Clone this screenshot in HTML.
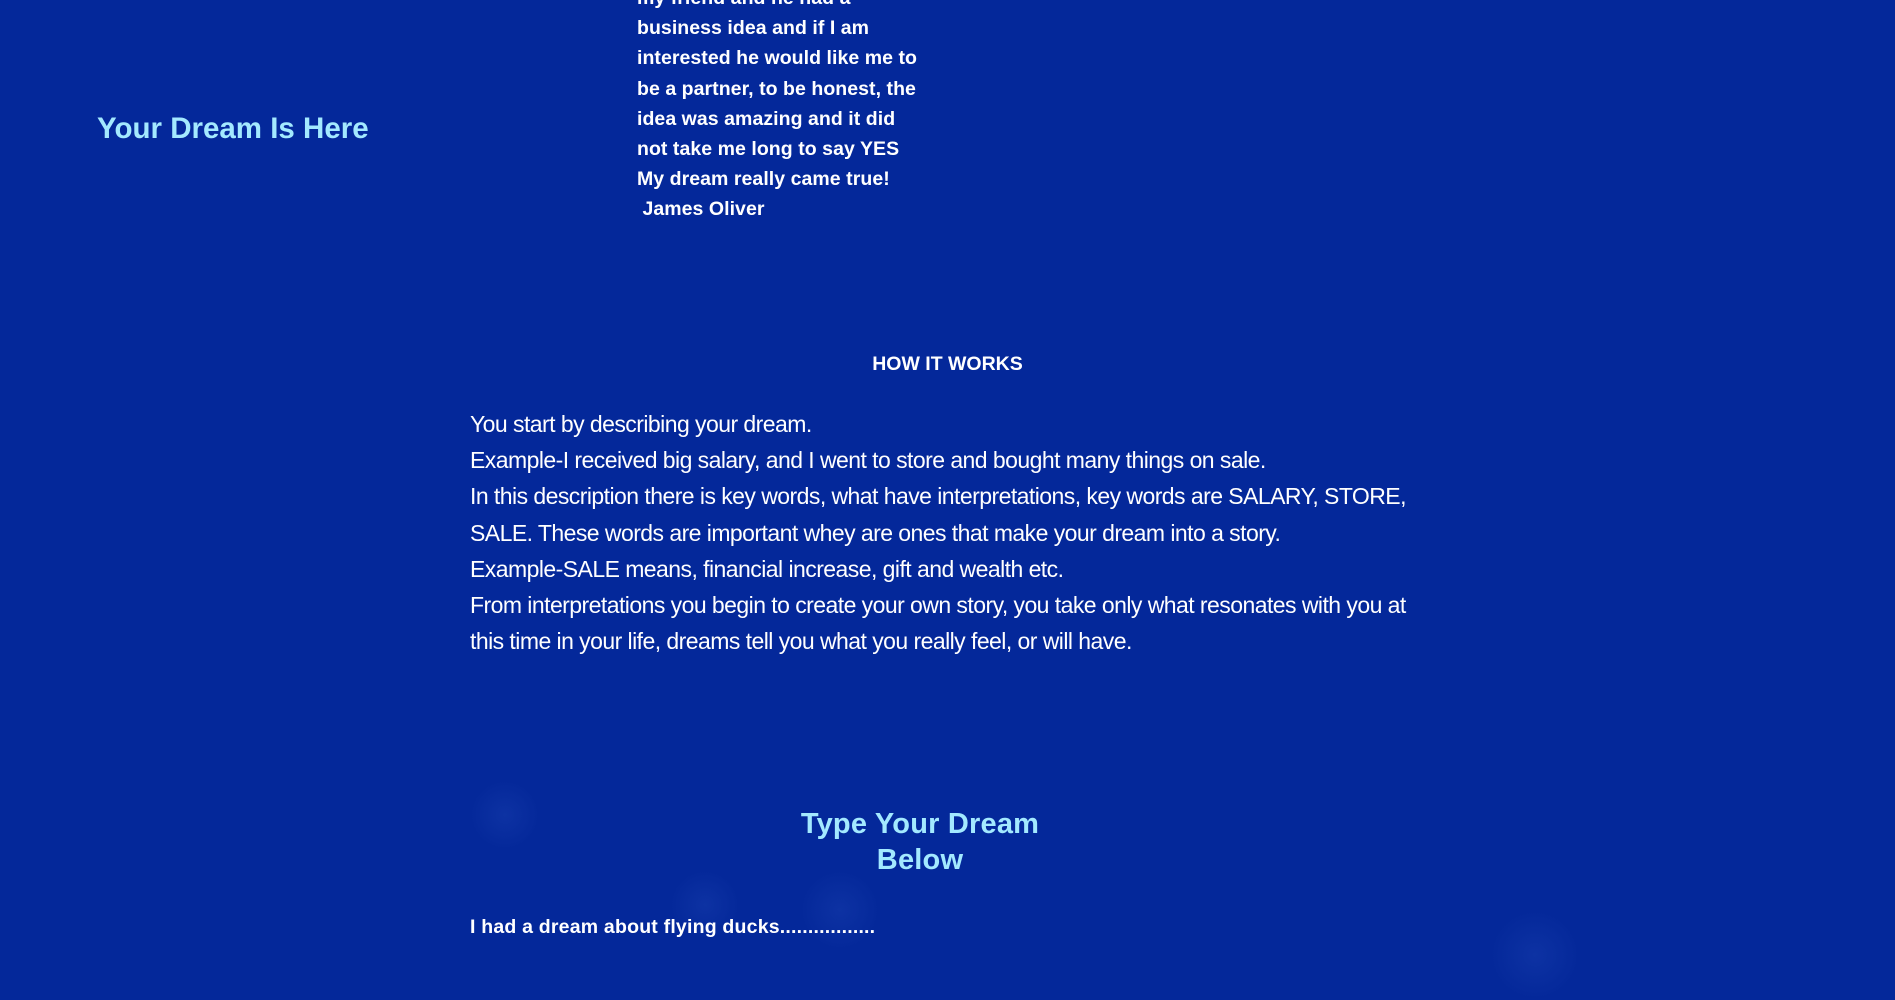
<!DOCTYPE html>
<html><head><meta charset="utf-8"><style>
html,body{margin:0;padding:0;width:1895px;height:967px;overflow:hidden;background:#04289a;font-family:"Liberation Sans",sans-serif;color:#fff}
.a{position:absolute;white-space:nowrap}
.t{left:637px;top:-17px;font-size:19.5px;font-weight:bold;line-height:30.2px;letter-spacing:0.05px}
.h{left:97px;top:112px;font-size:29.5px;font-weight:bold;color:#a3e9ff;letter-spacing:0px}
.hw{left:0;width:1895px;text-align:center;top:353px;font-size:19.5px;font-weight:bold;padding-left:0}
.b{left:470px;top:406px;font-size:23px;line-height:36.2px;letter-spacing:-0.55px}
.ty{left:720px;width:400px;text-align:center;top:806px;font-size:29px;font-weight:bold;line-height:36px;color:#a3e9ff;letter-spacing:0.2px}
.d{left:470px;top:916px;font-size:19.5px;font-weight:bold;letter-spacing:0.2px}
.g{position:absolute;border-radius:50%;background:radial-gradient(circle,rgba(40,80,190,.25),rgba(40,80,190,0) 70%)}
</style></head><body>
<div class="g" style="left:470px;top:780px;width:70px;height:70px"></div>
<div class="g" style="left:670px;top:870px;width:70px;height:70px"></div>
<div class="g" style="left:800px;top:870px;width:80px;height:80px"></div>
<div class="g" style="left:1490px;top:910px;width:90px;height:90px"></div>
<div class="a t">my friend and he had a<br>business idea and if I am<br>interested he would like me to<br>be a partner, to be honest, the<br>idea was amazing and it did<br>not take me long to say YES<br>My dream really came true!<br>&nbsp;James Oliver</div>
<div class="a h">Your Dream Is Here</div>
<div class="a hw">HOW IT WORKS</div>
<div class="a b">You start by describing your dream.<br>Example-I received big salary, and I went to store and bought many things on sale.<br>In this description there is key words, what have interpretations, key words are SALARY, STORE,<br>SALE. These words are important whey are ones that make your dream into a story.<br>Example-SALE means, financial increase, gift and wealth etc.<br>From interpretations you begin to create your own story, you take only what resonates with you at<br>this time in your life, dreams tell you what you really feel, or will have.</div>
<div class="a ty">Type Your Dream<br>Below</div>
<div class="a d">I had a dream about flying ducks.................</div>
</body></html>
